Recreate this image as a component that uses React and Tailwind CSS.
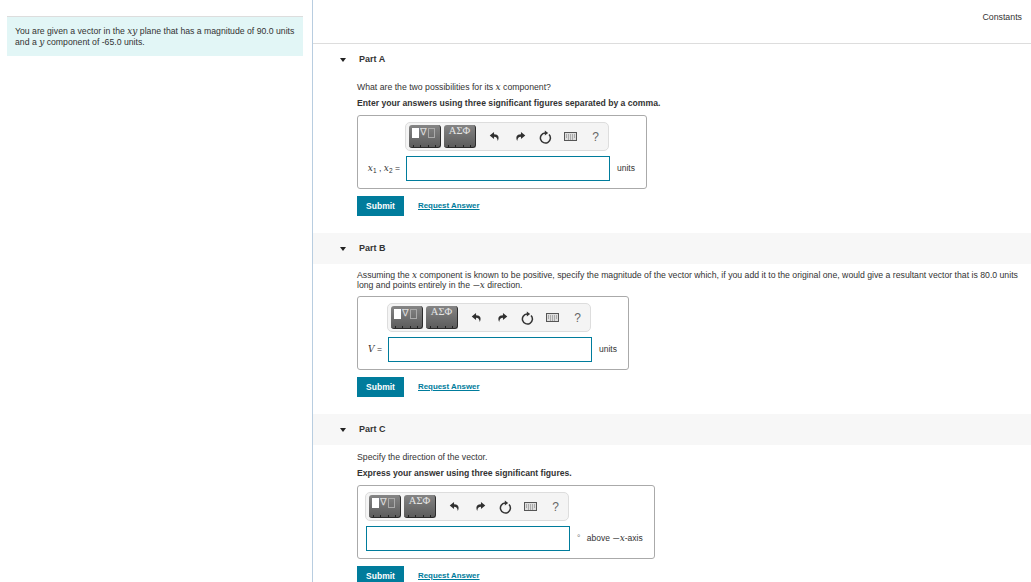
function M({ children }) {
  return <i className="font-['DejaVu_Serif',serif] text-[9px] leading-[0]">{children}</i>
}

function Minus() {
  return <span className="font-['Liberation_Serif',serif] text-[13px] leading-[0] align-[-2px]">−</span>
}

function ToolButton({ children }) {
  return (
    <div className="relative w-[32px] h-[23px] rounded-[3px] border-r border-b border-[#2c2c2c] bg-gradient-to-b from-[#858585] to-[#5c5c5c] overflow-hidden">
      {children}
      <div className="absolute left-[4px] right-[4px] bottom-0 flex justify-between">
        <span className="w-px h-[2px] bg-[#222]" />
        <span className="w-px h-[2px] bg-[#222]" />
        <span className="w-px h-[2px] bg-[#222]" />
        <span className="w-px h-[2px] bg-[#222]" />
      </div>
    </div>
  )
}

function Arrow({ flip }) {
  return (
    <svg width="11" height="11" viewBox="0 0 12 12" className={flip ? '-scale-x-100' : ''}>
      <path d="M5.5 1 L0.8 5 L5.5 8.6 V6.2 C8 6.2 9.2 7.6 9.6 11 C11.4 7 10.6 3.6 5.5 3.5 Z" fill="#2f2f2f" />
    </svg>
  )
}

function Refresh() {
  return (
    <svg width="13" height="14" viewBox="0 0 13 14">
      <path d="M10 4.5 A5 5 0 1 1 6 3" fill="none" stroke="#333" strokeWidth="1.5" />
      <path d="M5.8 0.4 L9.2 3 L5.8 5.4 Z" fill="#333" />
    </svg>
  )
}

function Toolbar() {
  return (
    <div className="w-[204px] h-[29px] shrink-0 -ml-px flex items-center pl-[3px] bg-[#f4f4f4] border border-[#ddd] rounded-[5px]">
      <div className="flex gap-[3px]">
        <ToolButton>
          <div className="flex items-start gap-px pl-[3px] pt-[1px]">
            <span className="w-[7px] h-[10px] mt-[2px] bg-white" />
            <span className="text-[10px] leading-[11px] text-[#ddd] font-['DejaVu_Sans',sans-serif]">∇</span>
            <span className="w-[7px] h-[10px] mt-[2px] border border-[#aaa]" />
          </div>
        </ToolButton>
        <ToolButton>
          <div className="text-center text-[10.5px] leading-[11px] text-[#e4e4e4] font-['Liberation_Serif',serif]">ΑΣΦ</div>
        </ToolButton>
      </div>
      <div className="flex items-center ml-[5px]">
        <span className="w-[26px] flex justify-center"><Arrow /></span>
        <span className="w-[26px] flex justify-center"><Arrow flip /></span>
        <span className="w-[24px] flex justify-center"><Refresh /></span>
        <span className="w-[26px] flex justify-center">
          <svg width="13" height="9" viewBox="0 0 13 9">
            <rect x="0.5" y="0.5" width="12" height="8" fill="#ddd" stroke="#555" />
            <path d="M2 3h9M2 5h9M4 7h5" stroke="#777" strokeWidth="1" strokeDasharray="1 1" />
          </svg>
        </span>
        <span className="w-[25px] text-center text-[12px] leading-none text-[#666]">?</span>
      </div>
    </div>
  )
}

function AnswerBox({ width, label, labelWidth, unit }) {
  return (
    <div className={`${width} h-[74px] border border-[#aaa] rounded-[3px] pt-[6px]`}>
      <div className="flex" style={{ paddingLeft: labelWidth }}>
        <Toolbar />
      </div>
      <div className="flex items-center mt-[5px]">
        <div className="shrink-0 flex justify-end pr-[6px] text-[8.7px] text-[#333] whitespace-nowrap" style={{ width: labelWidth }}>
          {label}
        </div>
        <div className="w-[204px] h-[25px] shrink-0 border border-[#007c9c] bg-white" />
        <div className="ml-[7px] whitespace-nowrap text-[8.5px] text-[#333]">{unit}</div>
      </div>
    </div>
  )
}

function SubmitRow() {
  return (
    <div className="flex items-center h-[20px]">
      <button className="w-[47px] h-[20px] bg-[#007c9c] text-white text-[8.5px] font-bold">Submit</button>
      <a className="ml-[14px] -mt-px text-[7.9px] font-bold text-[#007c9c] underline">Request Answer</a>
    </div>
  )
}

function PartHeader({ name, shaded }) {
  return (
    <div className={`h-[31px] flex items-center pl-[27px] ${shaded ? 'bg-[#f7f7f7]' : ''}`}>
      <span className="w-0 h-0 border-x-[3.5px] border-x-transparent border-t-[4px] border-t-[#222]" />
      <span className="ml-[13px] text-[9px] font-bold text-[#333]">{name}</span>
    </div>
  )
}

export default function App() {
  return (
    <div className="flex w-[1031px] h-[582px] overflow-hidden bg-white font-['Liberation_Sans',Arial,sans-serif] text-[#333]">
      <aside className="w-[313px] shrink-0 border-r border-[#b8cde0] pl-[7px] pt-[16px]">
        <div className="w-[296px] h-[40px] bg-[#e2f6f6] border-t border-[#ddd] pl-[8px] pr-[4px] pt-[9px] text-[8.7px] leading-[11px] text-[#333]">
          You are given a vector in the <M>xy</M> plane that has a magnitude of 90.0 units and a <M>y</M> component of -65.0 units.
        </div>
      </aside>

      <main className="flex-1 min-w-0">
        <div className="h-[44px] border-b border-[#ddd] flex justify-end pt-[11px] pr-[9px] text-[8.8px] leading-[12px]">Constants</div>
        <PartHeader name="Part A" />
        <div className="pl-[44px]">
          <p className="pt-[6px] text-[8.7px] leading-[12px]">What are the two possibilities for its <M>x</M> component?</p>
          <p className="mt-[4px] text-[8.65px] leading-[12px] font-bold">Enter your answers using three significant figures separated by a comma.</p>
          <div className="mt-[6px]">
            <AnswerBox width="w-[290px]" labelWidth={48} unit="units" label={<span><M>x</M><sub className="text-[6.5px]">1</sub> , <M>x</M><sub className="text-[6.5px]">2</sub> =</span>} />
          </div>
          <div className="mt-[7px]"><SubmitRow /></div>
        </div>

        <div className="mt-[17px]"><PartHeader name="Part B" shaded /></div>
        <div className="pl-[44px] pr-[10px]">
          <p className="pt-[6px] text-[8.7px] leading-[10px]">
            Assuming the <M>x</M> component is known to be positive, specify the magnitude of the vector which, if you add it to the original one, would give a resultant vector that is 80.0 units long and points entirely in the <Minus /><M>x</M> direction.
          </p>
          <div className="mt-[6px]">
            <AnswerBox width="w-[272px]" labelWidth={30} unit="units" label={<span><M>V</M> =</span>} />
          </div>
          <div className="mt-[7px]"><SubmitRow /></div>
        </div>

        <div className="mt-[17px]"><PartHeader name="Part C" shaded /></div>
        <div className="pl-[44px]">
          <p className="pt-[6px] text-[8.7px] leading-[12px]">Specify the direction of the vector.</p>
          <p className="mt-[4px] text-[8.65px] leading-[12px] font-bold">Express your answer using three significant figures.</p>
          <div className="mt-[6px]">
            <AnswerBox width="w-[298px]" labelWidth={8} unit={<span><span className="text-[#777] align-top mr-[4px]">°</span> above <Minus /><M>x</M>-axis</span>} label="" />
          </div>
          <div className="mt-[7px]"><SubmitRow /></div>
        </div>
      </main>
    </div>
  )
}
